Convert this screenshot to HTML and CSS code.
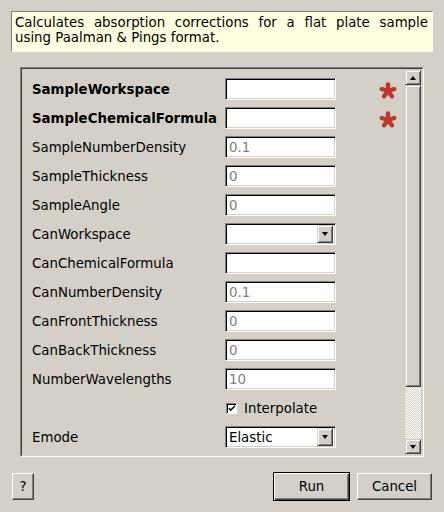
FILE: index.html
```html
<!DOCTYPE html>
<html>
<head>
<meta charset="utf-8">
<link rel="stylesheet" href="styles.css">
</head>
<body>
<div class="dialog">
  <div class="desc">Calculates absorption corrections for a flat plate sample using Paalman &amp; Pings format.</div>
  <div class="frame">
    <div class="viewport">
      <div class="rows">
        <div class="label req">SampleWorkspace</div><div class="field"><div class="edit"></div></div><div class="mark"><svg class="star" width="18" height="17" viewBox="0 0 18 17"><g stroke="#b93a2c" stroke-width="4.4" stroke-linecap="round"><line x1="9" y1="9" x2="9" y2="2.4"/><line x1="9" y1="9" x2="15.3" y2="7"/><line x1="9" y1="9" x2="2.7" y2="7"/><line x1="9" y1="9" x2="12.9" y2="14.3"/><line x1="9" y1="9" x2="5.1" y2="14.3"/></g></svg></div>
        <div class="label req">SampleChemicalFormula</div><div class="field"><div class="edit"></div></div><div class="mark"><svg class="star" width="18" height="17" viewBox="0 0 18 17"><g stroke="#b93a2c" stroke-width="4.4" stroke-linecap="round"><line x1="9" y1="9" x2="9" y2="2.4"/><line x1="9" y1="9" x2="15.3" y2="7"/><line x1="9" y1="9" x2="2.7" y2="7"/><line x1="9" y1="9" x2="12.9" y2="14.3"/><line x1="9" y1="9" x2="5.1" y2="14.3"/></g></svg></div>
        <div class="label">SampleNumberDensity</div><div class="field"><div class="edit ph">0.1</div></div><div class="mark"></div>
        <div class="label">SampleThickness</div><div class="field"><div class="edit ph">0</div></div><div class="mark"></div>
        <div class="label">SampleAngle</div><div class="field"><div class="edit ph">0</div></div><div class="mark"></div>
        <div class="label">CanWorkspace</div><div class="field"><div class="combo"><span class="val"></span><span class="drop"><span class="tri"></span></span></div></div><div class="mark"></div>
        <div class="label">CanChemicalFormula</div><div class="field"><div class="edit"></div></div><div class="mark"></div>
        <div class="label">CanNumberDensity</div><div class="field"><div class="edit ph">0.1</div></div><div class="mark"></div>
        <div class="label">CanFrontThickness</div><div class="field"><div class="edit ph">0</div></div><div class="mark"></div>
        <div class="label">CanBackThickness</div><div class="field"><div class="edit ph">0</div></div><div class="mark"></div>
        <div class="label">NumberWavelengths</div><div class="field"><div class="edit ph">10</div></div><div class="mark"></div>
        <div class="label"></div><div class="field check-field"><span class="check"><svg width="9" height="9" viewBox="0 0 9 9"><path d="M1 4 L3 6.5 L8 1.5" fill="none" stroke="#000" stroke-width="1.6"/></svg></span><span class="check-text">Interpolate</span></div><div class="mark"></div>
        <div class="label">Emode</div><div class="field"><div class="combo"><span class="val">Elastic</span><span class="drop"><span class="tri"></span></span></div></div><div class="mark"></div>
        <div class="label"></div><div class="field"><div class="edit"></div></div><div class="mark"></div>
      </div>
      <div class="scrollbar">
        <div class="sbtn"><span class="tri up"></span></div>
        <div class="thumb"></div>
        <div class="track"></div>
        <div class="sbtn"><span class="tri"></span></div>
      </div>
    </div>
  </div>
  <div class="buttons">
    <button class="btn help">?</button>
    <div class="spacer"></div>
    <button class="btn run">Run</button>
    <button class="btn cancel">Cancel</button>
  </div>
</div>
</body>
</html>
```
FILE: styles.css
```css
html, body {
  margin: 0;
  padding: 0;
  background: #d4d0c8;
  width: 444px;
  height: 512px;
  overflow: hidden;
}
.dialog {
  font-family: "DejaVu Sans", sans-serif;
  font-size: 13.33px;
  color: #000;
  display: flex;
  flex-direction: column;
  height: 512px;
  box-sizing: border-box;
  padding-top: 11px;
}
.desc {
  margin: 0 11px 0 11px;
  height: 41px;
  box-sizing: border-box;
  background: #ffffe1;
  border: 1px solid;
  border-color: #808080 #ffffff #ffffff #808080;
  padding: 3px 4px 0 3px;
  line-height: 15px;
  text-align: justify;
}
.frame {
  margin: 15px 20px 0 20px;
  height: 390px;
  box-sizing: border-box;
  border: 1px solid;
  border-color: #808080 #ffffff #ffffff #808080;
}
.viewport {
  height: 100%;
  box-sizing: border-box;
  border: 1px solid;
  border-color: #404040 #d4d0c8 #d4d0c8 #404040;
  display: flex;
  overflow: hidden;
}
.rows {
  flex: 1;
  display: grid;
  grid-template-columns: 193px 111px 1fr;
  grid-auto-rows: 22px;
  row-gap: 7px;
  padding: 9px 0 0 10px;
  overflow: hidden;
}
.label {
  display: flex;
  align-items: center;
  white-space: nowrap;
}
.label.req { font-weight: bold; }
.field { display: flex; align-items: stretch; }
.edit, .combo {
  flex: 1;
  box-sizing: border-box;
  background: #fff;
  border: 1px solid;
  border-color: #808080 #ffffff #ffffff #808080;
  box-shadow: inset 1px 1px 0 #000, inset -1px -1px 0 #d4d0c8;
  padding: 0 3px;
  display: flex;
  align-items: center;
}
.ph { color: #808080; }
.combo { padding: 0 2px 0 3px; }
.combo .val { flex: 1; }
.drop {
  width: 16px;
  height: 18px;
  box-sizing: border-box;
  background: #d4d0c8;
  border: 1px solid;
  border-color: #d4d0c8 #404040 #404040 #d4d0c8;
  box-shadow: inset 1px 1px 0 #fff, inset -1px -1px 0 #808080;
  display: flex;
  align-items: center;
  justify-content: center;
}
.tri {
  width: 0;
  height: 0;
  border-left: 3.5px solid transparent;
  border-right: 3.5px solid transparent;
  border-top: 4px solid #000;
}
.tri.up {
  border-top: 0;
  border-bottom: 4px solid #000;
}
.mark {
  display: flex;
  justify-content: flex-end;
  align-items: center;
  padding-right: 8px;
}
.star { display: block; margin-top: 2px; }
.check-field { align-items: center; padding-left: 1px; }
.check {
  width: 11px;
  height: 11px;
  box-sizing: border-box;
  background: #fff;
  border: 1px solid;
  border-color: #808080 #fff #fff #808080;
  box-shadow: inset 1px 1px 0 #000;
  display: flex;
  align-items: center;
  justify-content: center;
  padding: 1px 0 0 1px;
}
.check svg { display: block; }
.check-text { margin-left: 7px; }
.scrollbar {
  width: 16px;
  display: flex;
  flex-direction: column;
  margin: 1px 1px 1px 0;
}
.sbtn, .thumb {
  box-sizing: border-box;
  background: #d4d0c8;
  border: 1px solid;
  border-color: #d4d0c8 #404040 #404040 #d4d0c8;
  box-shadow: inset 1px 1px 0 #fff, inset -1px -1px 0 #808080;
}
.sbtn {
  height: 15px;
  display: flex;
  align-items: center;
  justify-content: center;
}
.thumb { height: 302px; }
.track {
  flex: 1;
  background: repeating-conic-gradient(#d4d0c8 0 25%, #ffffff 0 50%) 0 0 / 2px 2px;
}
.buttons {
  display: flex;
  align-items: flex-start;
  margin-top: 16px;
  padding: 0 12px;
}
.spacer { flex: 1; }
.btn {
  font-family: "DejaVu Sans", sans-serif;
  font-size: 13.33px;
  color: #000;
  background: #d4d0c8;
  height: 27px;
  box-sizing: border-box;
  border: 1px solid;
  border-color: #fff #404040 #404040 #fff;
  box-shadow: inset -1px -1px 0 #808080;
  padding: 0;
  margin: 0;
}
.help { width: 22px; }
.run {
  width: 77px;
  height: 29px;
  margin-top: -1px;
  border: 1px solid #000;
  box-shadow: inset 1px 1px 0 #fff, inset -1px -1px 0 #404040, inset -2px -2px 0 #808080;
}
.cancel { width: 75px; margin-left: 7px; }
```
